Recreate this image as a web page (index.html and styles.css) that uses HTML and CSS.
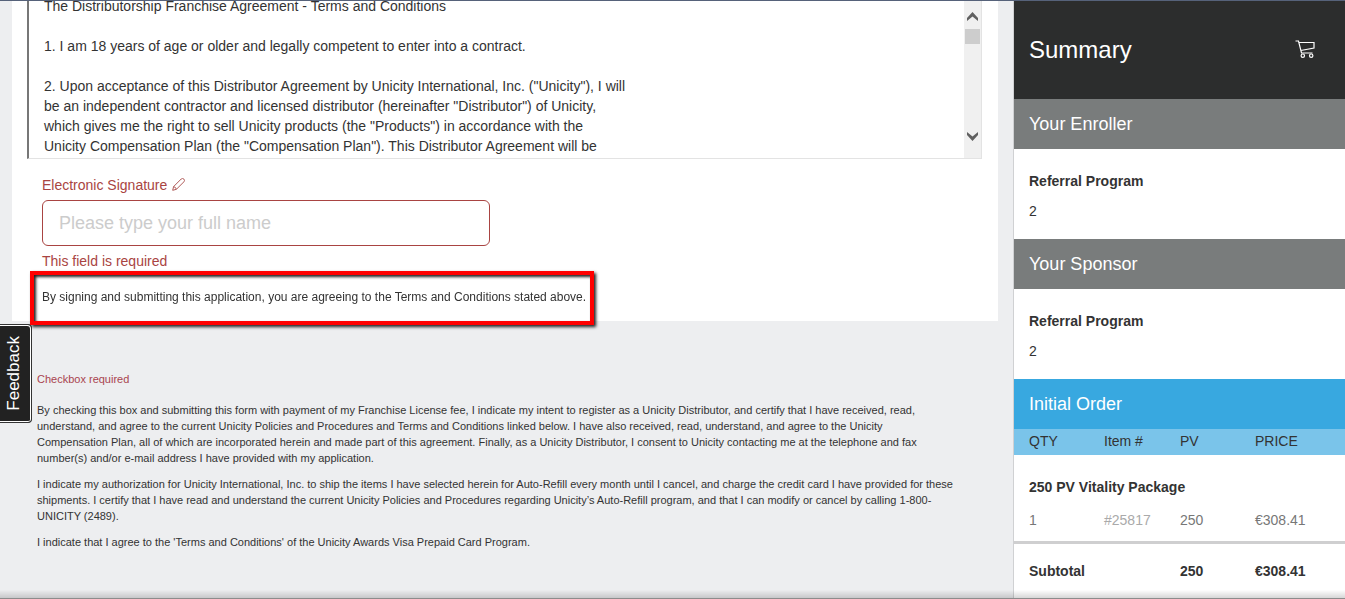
FILE: index.html
```html
<!DOCTYPE html>
<html lang="en">
<head>
<meta charset="utf-8">
<title>Distributor Application</title>
<link rel="stylesheet" href="styles.css">
</head>
<body>
<div class="page">
  <main class="main">
    <form class="card">
      <div class="terms">
        <textarea class="terms-text" rows="8" readonly aria-label="Terms and Conditions">The Distributorship Franchise Agreement - Terms and Conditions

1. I am 18 years of age or older and legally competent to enter into a contract.

2. Upon acceptance of this Distributor Agreement by Unicity International, Inc. ("Unicity"), I will
be an independent contractor and licensed distributor (hereinafter "Distributor") of Unicity,
which gives me the right to sell Unicity products (the "Products") in accordance with the
Unicity Compensation Plan (the "Compensation Plan"). This Distributor Agreement will be</textarea>
        <div class="scrollbar" aria-hidden="true">
          <div class="scroll-top">
            <svg width="13" height="9" viewBox="0 0 13 9"><path d="M1 6 6.5 0 12 6V9L6.5 4.5 1 9Z"/></svg>
            <div class="scroll-thumb"></div>
          </div>
          <svg width="13" height="9" viewBox="0 0 13 9"><path d="M1 3 6.5 9 12 3V0L6.5 4.5 1 0Z"/></svg>
        </div>
      </div>
      <div class="signature">
        <label class="label" for="signature"><span>Electronic Signature</span>
          <svg width="13" height="15" viewBox="0 0 13 15"><path d="M.7 12.3 1.6 8.6 9.2 1Q10.6-.2 11.9 1.1 13.1 2.4 11.9 3.8L4.4 11.3ZM1.6 8.6Q3.8 9 4.4 11.3"/></svg>
        </label>
        <input class="field" id="signature" type="text" placeholder="Please type your full name">
        <p class="error">This field is required</p>
        <p class="notice">By signing and submitting this application, you are agreeing to the Terms and Conditions stated above.</p>
      </div>
    </form>
    <section class="legal">
      <p class="legal-error">Checkbox required</p>
      <p>By checking this box and submitting this form with payment of my Franchise License fee, I indicate my intent to register as a Unicity Distributor, and certify that I have received, read, understand, and agree to the current Unicity Policies and Procedures and Terms and Conditions linked below. I have also received, read, understand, and agree to the Unicity Compensation Plan, all of which are incorporated herein and made part of this agreement. Finally, as a Unicity Distributor, I consent to Unicity contacting me at the telephone and fax number(s) and/or e-mail address I have provided with my application.</p>
      <p>I indicate my authorization for Unicity International, Inc. to ship the items I have selected herein for Auto-Refill every month until I cancel, and charge the credit card I have provided for these shipments. I certify that I have read and understand the current Unicity Policies and Procedures regarding Unicity’s Auto-Refill program, and that I can modify or cancel by calling 1-800-UNICITY (2489).</p>
      <p>I indicate that I agree to the 'Terms and Conditions' of the Unicity Awards Visa Prepaid Card Program.</p>
    </section>
  </main>
  <aside class="summary">
    <header class="summary-head">
      <h1>Summary</h1>
      <svg width="20" height="20" viewBox="0 0 20 20"><path d="M.5 1H3.5L6.5 13H17.5M4 2.5H19V8L5.8 10.5"/><circle cx="7.8" cy="15.7" r="1.7"/><circle cx="16.2" cy="15.7" r="1.7"/></svg>
    </header>
    <h2 class="bar">Your Enroller</h2>
    <div class="person"><strong>Referral Program</strong><span>2</span></div>
    <h2 class="bar">Your Sponsor</h2>
    <div class="person"><strong>Referral Program</strong><span>2</span></div>
    <h2 class="bar bar-blue">Initial Order</h2>
    <table class="order">
      <thead>
        <tr><th class="qty">QTY</th><th class="num">Item #</th><th class="pv">PV</th><th>PRICE</th></tr>
      </thead>
      <tbody>
        <tr class="package"><th colspan="4">250 PV Vitality Package</th></tr>
        <tr class="item"><td>1</td><td class="code">#25817</td><td>250</td><td>€308.41</td></tr>
      </tbody>
      <tfoot>
        <tr><th colspan="2">Subtotal</th><td>250</td><td>€308.41</td></tr>
      </tfoot>
    </table>
  </aside>
</div>
<button class="feedback" type="button">Feedback</button>
<div class="edge"></div>
</body>
</html>
```
FILE: styles.css
```css
* { box-sizing: border-box; }
body {
  margin: 0;
  background: #edeef0;
  color: #333;
  font: 14px/20px "Liberation Sans", Arial, sans-serif;
}
h1, h2, p { margin: 0; font-weight: normal; }
.page {
  display: flex;
  min-height: 100vh;
  border-top: 1px solid #56627a;
}
.main { flex: 1; min-width: 0; padding: 0 15px 0 12px; }
.card {
  background: #fff;
  padding: 0 16px 0 15px;
}
.terms {
  display: flex;
  overflow: hidden;
  border: solid #e3e3e3;
  border-width: 0 1px 1px 0;
  border-left: 2px solid #777;
}
.terms-text {
  flex: 1;
  min-width: 0;
  margin: -5px 0 2px;
  padding: 0 15px;
  border: 0;
  resize: none;
  overflow: hidden;
  outline: 0;
  background: #fff;
  color: #333;
  font: inherit;
}
.scrollbar {
  display: flex;
  flex-direction: column;
  align-items: center;
  justify-content: space-between;
  width: 17px;
  padding: 11px 1px 17px 0;
  background: #f0f0f0;
}
.scrollbar svg { display: block; fill: #606060; }
.scroll-top {
  display: flex;
  flex-direction: column;
  align-items: center;
  gap: 8px;
}
.scroll-thumb { width: 15px; height: 15px; background: #cdcdcd; }
.signature { display: flow-root; padding: 16px 15px 0; }
.label { display: flex; align-items: center; gap: 5px; color: #a94442; }
.label svg { fill: none; stroke: #b05a58; stroke-width: 1; }
.field {
  display: block;
  width: 448px;
  max-width: 100%;
  height: 46px;
  margin: 5px 0;
  padding: 0 16px;
  border: 1px solid #a94442;
  border-radius: 6px;
  background: #fff;
  font: 18px/24px "Liberation Sans", Arial, sans-serif;
}
.field::placeholder { color: #ccc; opacity: 1; }
.error { color: #a94442; }
.notice {
  position: relative;
  z-index: 3;
  width: fit-content;
  margin: 0 0 -4px -12px;
  padding: 12px 4px 14px 8px;
  border: 4px solid #f00;
  box-shadow: 2px 2px 3px #222, inset 2px 2px 3px #222;
  font-size: 12px;
}
.legal {
  padding: 50px 44px 10px 25px;
  font-size: 11px;
  line-height: 16px;
}
.legal p { margin-bottom: 10px; }
.legal .legal-error { margin-bottom: 15px; color: #a9444f; }
.summary {
  width: 332px;
  border-left: 1px solid #d0d1d3;
  background: #fff;
}
.summary-head {
  display: flex;
  align-items: center;
  justify-content: space-between;
  height: 98px;
  padding: 0 30px 0 15px;
  background: #2c2d2d;
  color: #fff;
}
.summary-head h1 { font-size: 24px; line-height: 30px; }
.summary-head svg { fill: none; stroke: #fff; stroke-width: 1.2; }
.bar {
  padding: 15px;
  background: #797c7c;
  color: #fff;
  font-size: 18px;
  line-height: 20px;
}
.bar-blue { background: #38a8e0; }
.person {
  display: flex;
  flex-direction: column;
  gap: 10px;
  padding: 22px 15px 18px;
}
.order {
  width: 100%;
  border-collapse: collapse;
  table-layout: fixed;
  text-align: left;
}
.order th, .order td { padding: 0; }
.order th:first-child, .order td:first-child { padding-left: 15px; }
.order thead th {
  padding: 2px 0 4px;
  background: #7ac4ea;
  font-weight: normal;
}
.order .qty { width: 90px; }
.order .num { width: 76px; }
.order .pv { width: 75px; }
.order .package th { padding-top: 22px; }
.order .item td { padding: 13px 0 11px; color: #777; }
.order .item td:first-child { padding-left: 15px; }
.order .item .code { color: #aaa; }
.order tfoot { border-top: 3px solid #cfcfd0; font-weight: bold; }
.order tfoot th, .order tfoot td { padding: 17px 0 16px; }
.feedback {
  position: fixed;
  left: 0;
  top: 324px;
  z-index: 2;
  width: 32px;
  height: 99px;
  padding: 0 3px 0 0;
  border: 1px solid #333;
  border-left: 0;
  border-radius: 0 4px 4px 0;
  box-shadow: inset -1px 1px #fff, inset 0 -1px #fff;
  background: #222;
  color: #fff;
  font: 17px/20px "Liberation Sans", Arial, sans-serif;
  writing-mode: sideways-lr;
}
.edge {
  position: fixed;
  left: 0;
  right: 0;
  bottom: 0;
  z-index: 4;
  height: 9px;
  border-bottom: 1px solid #8c8c8c;
  background: linear-gradient(rgba(0, 0, 0, 0), rgba(0, 0, 0, .16));
}
```
